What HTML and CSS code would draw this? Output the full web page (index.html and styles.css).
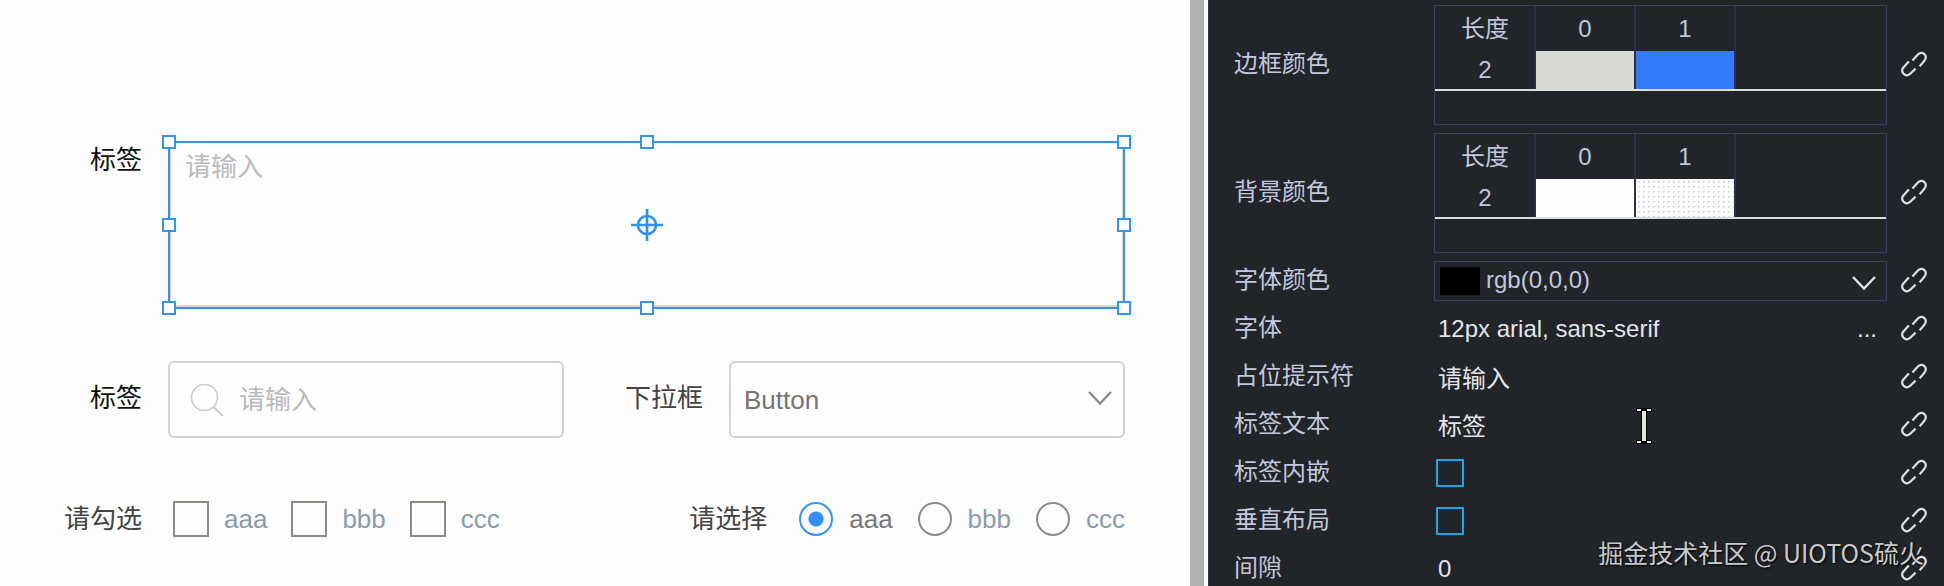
FILE: index.html
```html
<!DOCTYPE html>
<html lang="zh-CN">
<head>
<meta charset="utf-8">
<title>UIOTOS</title>
<link rel="stylesheet" href="styles.css">
</head>
<body>
<svg class="defs" aria-hidden="true">
  <symbol id="link" viewBox="0 0 26 26">
    <path d="M11.5 9.5L16.6 3.8C18.8 1.4 21.4 1.2 23.2 2.9C25.3 5 25.1 7.6 23.4 9.7L18.6 15.4M7.8 10.6L2.6 16.2C.8 18.3 .7 20.8 2.6 22.8C4.6 24.9 7.3 24.7 9.2 22.8L14.6 17.6" fill="none" stroke="currentColor" stroke-width="2.2"/>
  </symbol>
  <symbol id="chevron" viewBox="0 0 26 16">
    <path d="M2 2L13 13.5L24 2" fill="none" stroke="currentColor" stroke-width="2.4"/>
  </symbol>
</svg>
<div class="app">
  <main class="canvas">
    <div class="row row-area">
      <label class="label" for="area">标签</label>
      <div class="selection">
        <textarea id="area" class="area" placeholder="请输入"></textarea>
        <i class="handle left top"></i><i class="handle center top"></i><i class="handle right top"></i>
        <i class="handle left middle"></i><i class="handle right middle"></i>
        <i class="handle left bottom"></i><i class="handle center bottom"></i><i class="handle right bottom"></i>
        <svg class="anchor" viewBox="0 0 32 32"><path d="M16 0V32M0 16H32" stroke="#2f8ff5" stroke-width="2.6"/><circle cx="16" cy="16" r="9" fill="none" stroke="#2f8ff5" stroke-width="2.6"/></svg>
      </div>
    </div>
    <div class="row row-fields">
      <label class="label" for="search">标签</label>
      <div class="field">
        <svg class="search-icon" viewBox="0 0 34 34"><circle cx="14.5" cy="14.5" r="13" fill="none" stroke="#cbcbd0" stroke-width="1.6"/><path d="M23.5 24L33 33" stroke="#cbcbd0" stroke-width="2"/></svg>
        <input id="search" class="text" type="text" placeholder="请输入">
      </div>
      <label class="label soft" for="combo">下拉框</label>
      <div class="field combo">
        <select id="combo" class="select"><option>Button</option></select>
        <svg class="chevron"><use href="#chevron"/></svg>
      </div>
    </div>
    <div class="row-options">
      <div class="options checks" role="group" aria-labelledby="checks-label">
        <span id="checks-label" class="label soft">请勾选</span>
        <label class="option"><input class="check" type="checkbox">aaa</label>
        <label class="option"><input class="check" type="checkbox">bbb</label>
        <label class="option"><input class="check" type="checkbox">ccc</label>
      </div>
      <div class="options radios" role="radiogroup" aria-labelledby="radios-label">
        <span id="radios-label" class="label soft">请选择</span>
        <label class="option active"><input class="radio" type="radio" name="pick" checked>aaa</label>
        <label class="option"><input class="radio" type="radio" name="pick">bbb</label>
        <label class="option"><input class="radio" type="radio" name="pick">ccc</label>
      </div>
    </div>
  </main>
  <div class="divider"></div>
  <aside class="panel">
    <div class="prop">
      <span class="name">边框颜色</span>
      <div class="box tall">
        <table class="colors">
          <tr><th>长度</th><th>0</th><th>1</th><th></th></tr>
          <tr><td>2</td><td class="gray"></td><td class="blue"></td><td></td></tr>
        </table>
      </div>
      <button class="link" aria-label="绑定"><svg class="link-icon"><use href="#link"/></svg></button>
    </div>
    <div class="prop">
      <span class="name">背景颜色</span>
      <div class="box tall">
        <table class="colors">
          <tr><th>长度</th><th>0</th><th>1</th><th></th></tr>
          <tr><td>2</td><td class="white"></td><td class="clear"></td><td></td></tr>
        </table>
      </div>
      <button class="link" aria-label="绑定"><svg class="link-icon"><use href="#link"/></svg></button>
    </div>
    <div class="prop">
      <label class="name" for="color">字体颜色</label>
      <div class="box color">
        <select id="color" class="color-select"><option>rgb(0,0,0)</option></select>
        <span class="swatch"></span>
        <svg class="chevron"><use href="#chevron"/></svg>
      </div>
      <button class="link" aria-label="绑定"><svg class="link-icon"><use href="#link"/></svg></button>
    </div>
    <div class="prop">
      <label class="name" for="font">字体</label>
      <div class="value"><input id="font" class="entry" type="text" value="12px arial, sans-serif"><button class="more">...</button></div>
      <button class="link" aria-label="绑定"><svg class="link-icon"><use href="#link"/></svg></button>
    </div>
    <div class="prop">
      <label class="name" for="hint">占位提示符</label>
      <div class="value cjk"><input id="hint" class="entry" type="text" value="请输入"></div>
      <button class="link" aria-label="绑定"><svg class="link-icon"><use href="#link"/></svg></button>
    </div>
    <div class="prop">
      <label class="name" for="text">标签文本</label>
      <div class="value cjk"><input id="text" class="entry" type="text" value="标签"></div>
      <button class="link" aria-label="绑定"><svg class="link-icon"><use href="#link"/></svg></button>
    </div>
    <div class="prop">
      <label class="name" for="inset">标签内嵌</label>
      <div class="value"><input id="inset" class="toggle" type="checkbox"></div>
      <button class="link" aria-label="绑定"><svg class="link-icon"><use href="#link"/></svg></button>
    </div>
    <div class="prop">
      <label class="name" for="vertical">垂直布局</label>
      <div class="value"><input id="vertical" class="toggle" type="checkbox"></div>
      <button class="link" aria-label="绑定"><svg class="link-icon"><use href="#link"/></svg></button>
    </div>
    <div class="prop">
      <label class="name" for="gap">间隙</label>
      <div class="value"><input id="gap" class="entry" type="text" value="0"></div>
      <button class="link" aria-label="绑定"><svg class="link-icon"><use href="#link"/></svg></button>
    </div>
    <svg class="cursor" viewBox="0 0 16 36"><path d="M0 0H7L8 1L9 0H16V4H11V32H16V36H9L8 35L7 36H0V32H5V4H0Z" fill="#000"/><path d="M1 1H5V3H1ZM11 1H15V3H11ZM6 3H10V33H6ZM1 33H5V35H1ZM11 33H15V35H11Z" fill="#e6e6de"/></svg>
    <div class="watermark">掘金技术社区 @ UIOTOS硫火</div>
  </aside>
</div>
</body>
</html>
```

FILE: styles.css
```css
* { box-sizing: border-box; }
body {
  margin: 0;
  font-family: "Liberation Sans", "Noto Sans CJK SC", sans-serif;
  background: #fdfdfe;
}
input, textarea, select, button { font: inherit; color: inherit; }
.defs { position: absolute; width: 0; height: 0; }
.app { display: flex; height: 100vh; overflow: hidden; }

.canvas {
  flex: 1;
  min-width: 0;
  padding: 141px 65px 0 0;
  font-size: 26px;
  line-height: 36px;
  color: #757575;
}
.label { color: #111; text-align: right; white-space: nowrap; }
.label.soft { color: #444; }
.row { display: grid; }
.row-area { grid-template-columns: 142px 1fr; column-gap: 26px; }
.row-area .label { padding-top: 1px; }
.selection {
  position: relative;
  display: flex;
  height: 168px;
  border: 2px solid #3b8fec;
}
.area {
  flex: 1;
  min-width: 0;
  padding: 6px 14px;
  border: 1px solid #d8d8dc;
  border-top-width: 0;
  border-bottom-width: 2px;
  background: none;
  resize: none;
  outline: none;
}
.area::placeholder, .text::placeholder { color: #bababa; opacity: 1; }
.handle {
  position: absolute;
  width: 14px;
  height: 14px;
  border: 2px solid #3494f6;
  background: #fff;
}
.left { left: -8px; }
.center { left: calc(50% - 7px); }
.right { right: -8px; }
.top { top: -8px; }
.middle { top: calc(50% - 7px); }
.bottom { bottom: -8px; }
.anchor {
  position: absolute;
  left: calc(50% - 16px);
  top: calc(50% - 16px);
  width: 32px;
  height: 32px;
}
.row-fields {
  grid-template-columns: 142px 1fr 113px 1fr;
  column-gap: 26px;
  align-items: center;
  margin-top: 52px;
}
.row-fields .label { padding-bottom: 4px; }
.field {
  display: flex;
  align-items: center;
  min-width: 0;
  height: 77px;
  border: 2px solid #d2d2d4;
  border-radius: 6px;
  background: #fefefe;
}
.search-icon { flex: none; width: 34px; height: 34px; margin-left: 20px; }
.text {
  flex: 1;
  min-width: 0;
  margin-left: 15px;
  padding: 0;
  border: 0;
  background: none;
  outline: none;
}
.combo { display: grid; }
.combo > *, .color > * { grid-area: 1 / 1; }
.select, .color-select {
  width: 100%;
  height: 100%;
  border: 0;
  background: none;
  appearance: none;
  outline: none;
}
.select { padding: 0 13px; }
.chevron { justify-self: end; width: 26px; height: 16px; pointer-events: none; }
.combo .chevron { margin: 0 10px 4px 0; color: #8a8a8e; }

.row-options {
  display: flex;
  justify-content: space-between;
  margin-top: 63px;
}
.options { display: flex; align-items: center; }
.option { display: flex; align-items: center; gap: 16px; margin-left: 25px; color: #8a9bab; }
.option.active { color: #77777a; }
.checks .label { width: 142px; }
.checks .option { gap: 15px; margin-left: 24px; }
.checks .label + .option { margin-left: 31px; }
.radios .label + .option { margin-left: 32px; }
.check, .radio { appearance: none; margin: 0; flex: none; }
.check { width: 36px; height: 36px; border: 2px solid #8c8c84; }
.radio { width: 34px; height: 34px; border: 2px solid #8c8c8c; border-radius: 50%; }
.radio:checked {
  border-color: #3494f6;
  background: radial-gradient(circle, #2f8ff5 7px, transparent 8px);
}

.divider { flex: none; width: 18px; border-right: 4px solid #fdfdfe; background: #b1b1af; }

.panel {
  position: relative;
  flex: none;
  width: 736px;
  padding: 1px 0 0 25px;
  border-left: 1px solid #34344e;
  background: #212428;
  color: #c3c7dc;
  font-size: 24px;
  line-height: 36px;
}
.prop {
  display: grid;
  grid-template-columns: 200px 1fr 57px;
  align-items: center;
  min-height: 48px;
}
.name { padding-bottom: 2px; }
.box { border: 1px solid #3e3e5e; }
.tall { height: 120px; margin: 4px 0; }
.colors {
  width: 100%;
  border-collapse: separate;
  border-spacing: 0;
  table-layout: fixed;
  border-bottom: 2px solid #dcdfe0;
}
.colors th, .colors td {
  width: 100px;
  padding: 0;
  border-right: 2px solid #2f3048;
  background-clip: padding-box;
  font-weight: normal;
  text-align: center;
}
.colors th:first-child, .colors td:first-child { width: 101px; padding-left: 1px; }
.colors th { height: 45px; }
.colors td { height: 38px; }
.colors th:last-child, .colors td:last-child { width: auto; border-right: 0; }
.colors .gray { background-color: #d6d8d4; }
.colors .blue { background-color: #327cfb; }
.colors .white { background-color: #fefefe; }
.colors .clear {
  background-color: #fefefe;
  background-image: radial-gradient(circle, #d4d4dc 1px, transparent 1px);
  background-size: 5px 5px;
}
.color { display: grid; align-items: center; height: 40px; }
.color-select { padding: 0 0 2px 51px; }
.swatch { width: 40px; height: 28px; margin-left: 5px; background: #000; pointer-events: none; }
.color .chevron { margin: 4px 9px 0 0; color: #e2e2e6; }
.value { display: flex; align-items: center; padding-left: 2px; color: #e4e5e8; }
.cjk { padding-top: 4px; }
.entry {
  flex: 1;
  min-width: 0;
  padding: 0 0 0 2px;
  border: 0;
  background: none;
  outline: none;
}
.more { padding: 0 10px 0 0; border: 0; background: none; }
.toggle {
  appearance: none;
  width: 28px;
  height: 28px;
  margin: 0;
  border: 2px solid #1fa6e2;
}
.link { display: flex; padding: 0 0 2px 14px; border: 0; background: none; color: #dedfe2; }
.link-icon { width: 26px; height: 26px; }
.cursor { position: absolute; left: 427px; top: 408px; width: 16px; height: 36px; }
.watermark {
  position: absolute;
  right: 20px;
  top: 534px;
  font-family: "Noto Sans CJK SC", sans-serif;
  font-size: 25px;
  color: #c9cacc;
  text-shadow: 1px 1px 2px #000;
  white-space: nowrap;
}
```
